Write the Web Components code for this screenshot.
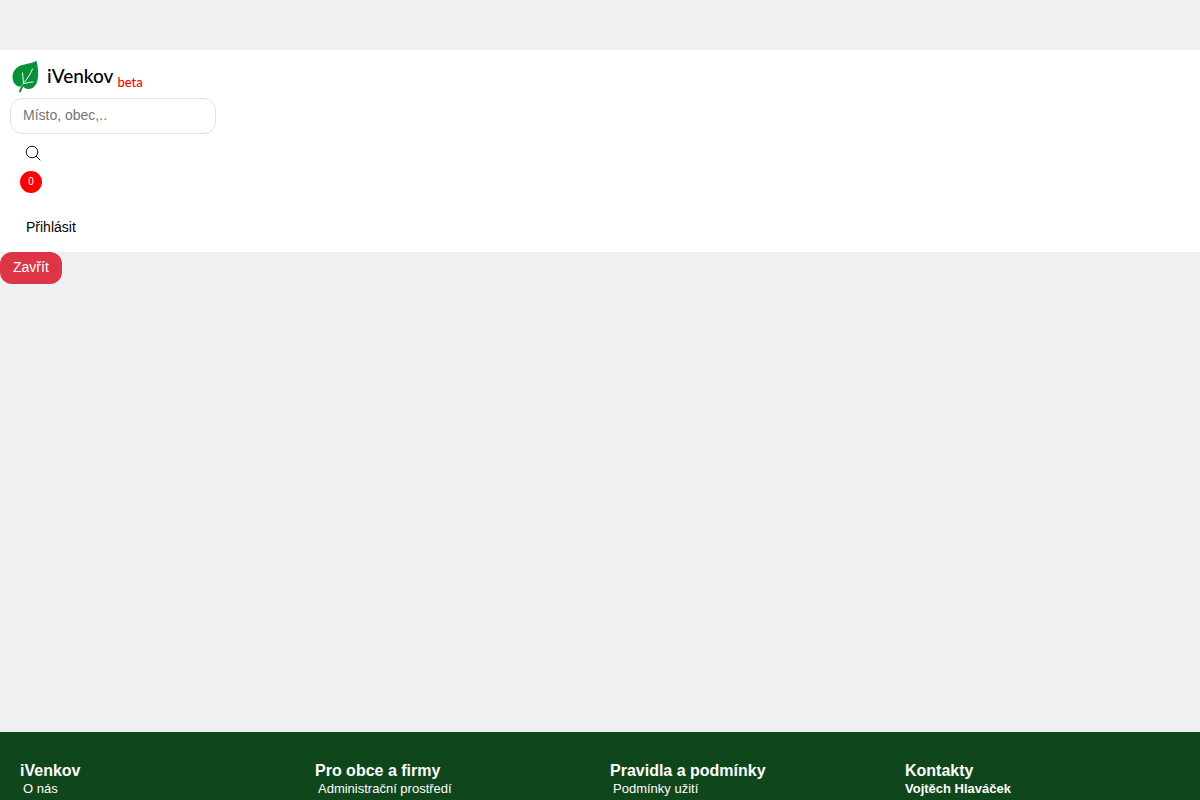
<!DOCTYPE html>
<html lang="cs">
<head>
<meta charset="utf-8">
<meta name="viewport" content="width=device-width, initial-scale=1">
<title>iVenkov</title>
<style>
html,body{margin:0}
body{background:#f0f0f0;font:14px/20px "Liberation Sans",Arial,sans-serif;color:#000}
</style>
</head>
<body>
<iv-page>
  <iv-header slot="header"></iv-header>
  <iv-button>Zavřít</iv-button>
  <iv-footer slot="footer">
    <iv-column heading="iVenkov"><a href="#o-nas">O nás</a></iv-column>
    <iv-column heading="Pro obce a firmy"><a href="#administrace">Administrační prostředí</a></iv-column>
    <iv-column heading="Pravidla a podmínky"><a href="#podminky">Podmínky užití</a></iv-column>
    <iv-column heading="Kontakty"><strong>Vojtěch Hlaváček</strong></iv-column>
  </iv-footer>
</iv-page>
<script>
const define = (name, html, setup) => customElements.define(name, class extends HTMLElement {
  connectedCallback() {
    if (this.shadowRoot) return;
    const root = this.attachShadow({ mode: "open" });
    root.innerHTML = html;
    if (setup) setup(this, root);
  }
});

define("iv-page", `
<style>
:host{display:flex;flex-direction:column;min-height:100vh;padding-top:50px;box-sizing:border-box}
main{min-height:60vh}
::slotted(iv-footer){flex:1}
</style>
<slot name="header"></slot>
<main><slot></slot></main>
<slot name="footer"></slot>`);

define("iv-logo", `
<style>
:host{display:block}
a{display:flex;align-items:center;gap:7px;padding-left:2px;color:#000;text-decoration:none}
svg{display:block;width:28px;height:34px}
.name{font:500 19px/24px Lato,sans-serif}
sub{font:500 13px/16px Lato,sans-serif;color:#f00;vertical-align:-4px;margin-left:4px}
</style>
<a href="#">
<svg viewBox="0 0 28 34" aria-hidden="true">
<path fill="#079238" d="M24.6 1C26 7 26.8 14 25.5 20C24 28 18 30.5 12.5 28L11 25C8 28 4 26 2 23C-.5 18 0 12 4.500 8C10 3.500 17 4.500 24.600 1Z"/>
<path fill="none" stroke="#fff" stroke-width="1" stroke-linecap="round" d="M9.500 26C13 21 18 16 20.500 9M11.500 23L10.500 13M12.500 23.500C15 23 18 22 21 22"/>
<path fill="none" stroke="#079238" stroke-width="2" stroke-linecap="round" d="M8 31.500Q9 27.500 11.500 25"/>
</svg>
<span class="name">iVenkov<sub>beta</sub></span>
</a>`);

define("iv-header", `
<style>
:host{display:block;background:#fff;padding:10px}
form{display:flex;flex-direction:column;align-items:flex-start;margin-top:4px}
input{box-sizing:border-box;width:206px;height:36px;margin:0;padding:0 12px 2px;border:1px solid #dee2e6;border-radius:12px;background:#fff;color:#212529;font:inherit}
input::placeholder{color:#757575;opacity:1}
button{font:inherit;border:0;background:none;padding:0;margin:0;color:#000}
.search{margin:11px 15px 0}
.search svg{display:block;width:16px;height:16px}
.badge{display:block;width:22px;height:22px;margin:10px 10px 0;border-radius:50%;background:#f00;color:#fff;font-size:10px;line-height:22px;text-align:center;text-decoration:none}
.login{display:block;margin:24px 16px 5px}
</style>
<iv-logo></iv-logo>
<form>
<input type="text" aria-label="Místo, obec" placeholder="Místo, obec,..">
<button class="search" type="button" aria-label="Hledat">
<svg viewBox="0 0 16 16" aria-hidden="true"><g fill="none" stroke="#111"><circle cx="7" cy="7" r="5.800"/><path stroke-linecap="round" d="M11.200 11.200L15 15"/></g></svg>
</button>
</form>
<a class="badge" href="#kosik">0</a>
<button class="login" type="button">Přihlásit</button>`);

define("iv-button", `
<style>
:host{display:block}
button{display:block;height:32px;margin:0;padding:0 13px 2px;border:0;border-radius:12px;background:#dc3545;color:#fff;font:inherit}
</style>
<button type="button"><slot></slot></button>`);

define("iv-footer", `
<style>
:host{display:grid;grid-template-columns:repeat(4,1fr);gap:20px;padding:30px 20px 0;background:#10461c;color:#fff}
</style>
<slot></slot>`);

define("iv-column", `
<style>
:host{display:block;font-size:13px;line-height:18px}
h2{margin:0;font-size:16px;line-height:18px}
::slotted(a){color:#fff;text-decoration:none;padding-left:3px}
</style>
<h2></h2>
<slot></slot>`, (host, root) => {
  root.querySelector("h2").textContent = host.getAttribute("heading");
});
</script>
</body>
</html>
